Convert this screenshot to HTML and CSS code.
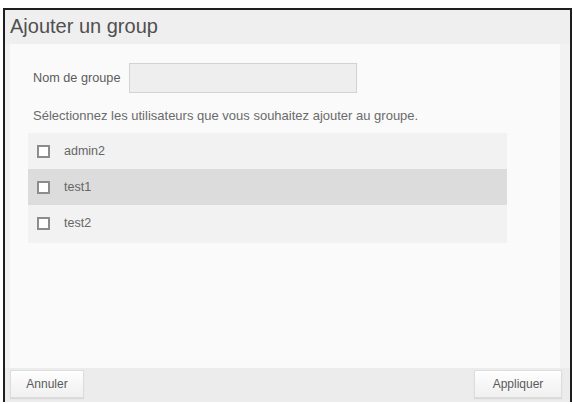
FILE: index.html
```html
<!DOCTYPE html>
<html lang="fr">
<head>
<meta charset="utf-8">
<title>Ajouter un group</title>
<link rel="stylesheet" href="styles.css">
</head>
<body>
<div class="dialog">
  <div class="title">Ajouter un group</div>
  <div class="content">
    <div class="panel">
      <div class="field">
        <span class="label">Nom de groupe</span>
        <span class="input"></span>
      </div>
      <p class="hint">Sélectionnez les utilisateurs que vous souhaitez ajouter au groupe.</p>
      <ul class="list">
        <li class="row"><span class="box"></span><span class="name">admin2</span></li>
        <li class="row active"><span class="box"></span><span class="name">test1</span></li>
        <li class="row"><span class="box"></span><span class="name">test2</span></li>
      </ul>
    </div>
  </div>
  <div class="footer">
    <button class="btn cancel">Annuler</button>
    <button class="btn apply">Appliquer</button>
  </div>
</div>
</body>
</html>
```
FILE: styles.css
```css
html, body {
  margin: 0;
  padding: 0;
  background: #ffffff;
  font-family: "Liberation Sans", Arial, sans-serif;
}
.dialog {
  margin: 8px 1px 0 3px;
  height: 392px;
  border: 2px solid #1e1e1e;
  border-bottom: none;
  display: flex;
  flex-direction: column;
  background: #f1f1f1;
}
.title {
  height: 34px;
  line-height: 33px;
  padding-left: 5px;
  background: #efefef;
  color: #505050;
  font-size: 20px;
  flex: none;
}
.content {
  flex: 1;
  padding: 0 10px 0 5px;
  background: #f2f2f2;
  display: flex;
}
.panel {
  flex: 1;
  background: #fafafa;
  padding: 19px 0 0 18px;
}
.field {
  display: flex;
  align-items: center;
  gap: 9px;
  padding-left: 5px;
}
.label {
  font-size: 12.7px;
  color: #5c5c5c;
}
.input {
  width: 228px;
  height: 30px;
  background: #eeeeee;
  border: 1px solid #d2d2d2;
  box-sizing: border-box;
}
.hint {
  margin: 15px 0 0 5px;
  font-size: 13px;
  color: #6a6a6a;
  line-height: 16px;
}
.list {
  list-style: none;
  margin: 9px 0 0 0;
  padding: 0 0 2px 0;
  width: 479px;
  background: #f2f2f2;
}
.row {
  height: 36px;
  display: flex;
  align-items: center;
  padding-left: 9px;
}
.row.active {
  background: #dcdcdc;
}
.box {
  width: 13px;
  height: 13px;
  box-sizing: border-box;
  border: 2px solid #8c8c8c;
  background: #ffffff;
  flex: none;
}
.name {
  margin-left: 14px;
  font-size: 12.5px;
  color: #666666;
}
.footer {
  height: 32px;
  flex: none;
  background: #ececec;
  display: flex;
  justify-content: space-between;
  align-items: flex-start;
  padding: 2px 8px 0 5px;
}
.btn {
  height: 28px;
  border: 1px solid #dddddd;
  background: linear-gradient(#fefefe, #f0f0f0);
  color: #5a5a5a;
  font-family: "Liberation Sans", Arial, sans-serif;
  font-size: 12px;
  padding: 0;
  box-shadow: 0 1px 1px rgba(0,0,0,0.08);
}
.cancel { width: 74px; }
.apply { width: 88px; }
```
